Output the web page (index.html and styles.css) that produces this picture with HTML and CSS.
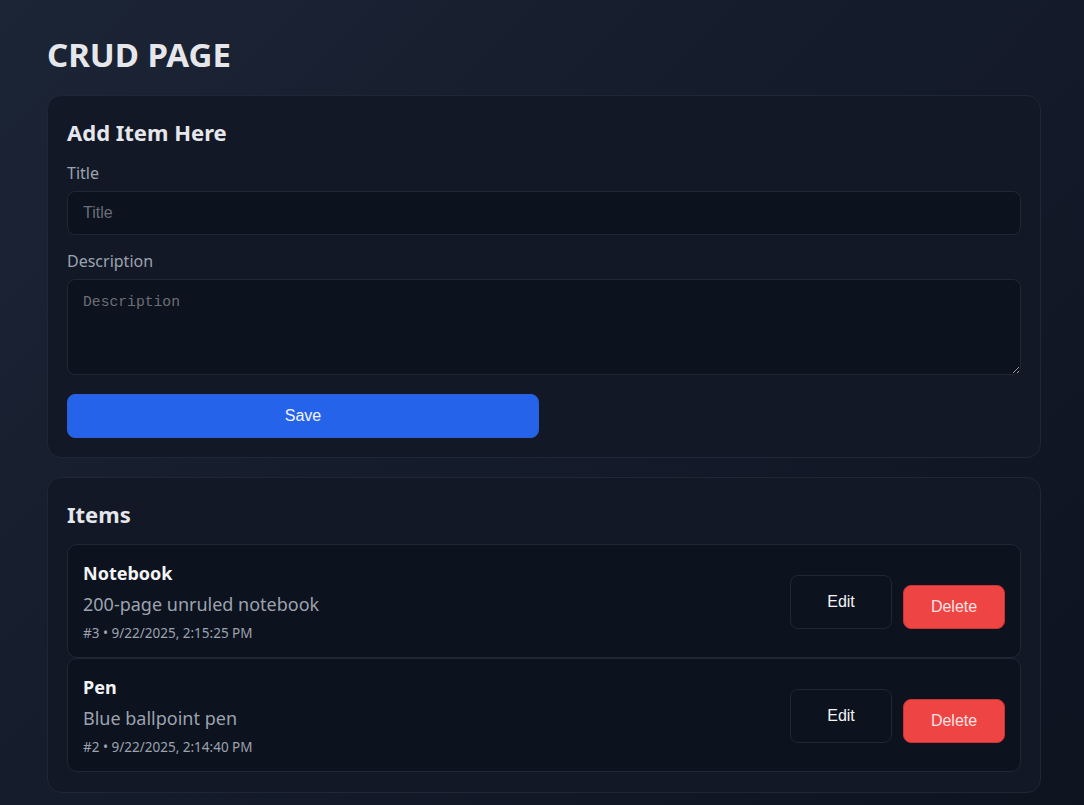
FILE: index.html
```html
<!DOCTYPE html>
<html>
<head>
<meta charset="utf-8">
<link rel="stylesheet" href="styles.css">
</head>
<body>
<div class="page">
  <h1 class="title">CRUD PAGE</h1>
  <section class="card form-card">
    <h2 class="card-title">Add Item Here</h2>
    <label class="label">Title</label>
    <input class="input" type="text" placeholder="Title">
    <label class="label">Description</label>
    <textarea class="textarea" placeholder="Description"></textarea>
    <button class="btn-save">Save</button>
  </section>
  <section class="card list-card">
    <h2 class="card-title">Items</h2>
    <div class="items">
      <div class="item">
        <div class="item-info">
          <div class="item-name">Notebook</div>
          <div class="item-desc">200-page unruled notebook</div>
          <div class="item-meta">#3 • 9/22/2025, 2:15:25 PM</div>
        </div>
        <div class="actions">
          <button class="btn-edit">Edit</button>
          <button class="btn-delete">Delete</button>
        </div>
      </div>
      <div class="item">
        <div class="item-info">
          <div class="item-name">Pen</div>
          <div class="item-desc">Blue ballpoint pen</div>
          <div class="item-meta">#2 • 9/22/2025, 2:14:40 PM</div>
        </div>
        <div class="actions">
          <button class="btn-edit">Edit</button>
          <button class="btn-delete">Delete</button>
        </div>
      </div>
    </div>
  </section>
</div>
</body>
</html>
```

FILE: styles.css
```css
html, body {
  margin: 0;
  padding: 0;
  height: 100%;
}
body {
  background: linear-gradient(135deg, #1c2536 0%, #141b2a 50%, #0e1320 100%);
  font-family: "Noto Sans", "Open Sans", sans-serif;
  color: #e5e7eb;
  overflow: hidden;
}
.page {
  margin: 0 43px 0 47px;
  padding-top: 33px;
}
.title {
  margin: 0 0 18px 0;
  font-size: 33px;
  font-weight: 700;
  line-height: 44px;
  color: #e5e7eb;
}
.card {
  background: #121826;
  border: 1px solid #1f2735;
  border-radius: 14px;
  padding: 20px 19px;
  margin-bottom: 19px;
}
.card-title {
  margin: 0;
  font-size: 22px;
  font-weight: 700;
  line-height: 32px;
  color: #e5e7eb;
}
.form-card {
  padding-bottom: 19px;
}
.form-card .card-title {
  margin-bottom: 14px;
}
.label {
  display: block;
  font-size: 16px;
  line-height: 22px;
  color: #9ca3af;
  margin-bottom: 7px;
}
.input, .textarea {
  display: block;
  box-sizing: border-box;
  width: 100%;
  background: #0c121e;
  border: 1px solid #1f2735;
  border-radius: 8px;
  color: #e5e7eb;
  padding: 0 15px;
  outline: none;
}
.input {
  height: 44px;
  font-family: "Liberation Sans", Arial, sans-serif;
  font-size: 16px;
  margin-bottom: 15px;
}
.input::placeholder {
  color: #6b6f76;
}
.textarea {
  height: 96px;
  padding: 14px 15px;
  font-family: "Liberation Mono", "DejaVu Sans Mono", monospace;
  font-size: 14.7px;
  resize: vertical;
  margin-bottom: 19px;
}
.textarea::placeholder {
  color: #6b6f76;
}
.btn-save {
  display: block;
  width: 472px;
  height: 44px;
  background: #2563eb;
  border: 1px solid #2d5fd6;
  border-radius: 8px;
  color: #f3f4f6;
  font-family: "Liberation Sans", Arial, sans-serif;
  font-size: 16px;
  cursor: pointer;
}
.list-card {
  padding-top: 20px;
}
.list-card .card-title {
  margin-bottom: 14px;
}
.items {
  display: flex;
  flex-direction: column;
  gap: 0;
}
.item {
  display: flex;
  align-items: center;
  justify-content: space-between;
  background: #0c121e;
  border: 1px solid #1f2735;
  border-radius: 10px;
  padding: 15px 15px 13px 15px;
}
.item-name {
  font-size: 18px;
  font-weight: 700;
  line-height: 26px;
  color: #f3f4f6;
}
.item-desc {
  font-size: 18px;
  line-height: 28px;
  color: #9ca3af;
  margin-top: 4px;
}
.item-meta {
  font-size: 13.5px;
  line-height: 22px;
  color: #9ca3af;
  margin-top: 4px;
}
.actions {
  display: flex;
  align-items: flex-end;
  gap: 11px;
}
.btn-edit, .btn-delete {
  width: 102px;
  font-family: "Liberation Sans", Arial, sans-serif;
  font-size: 16px;
  border-radius: 8px;
  cursor: pointer;
}
.btn-edit {
  height: 54px;
  background: #0c121e;
  border: 1px solid #1f2735;
  color: #f3f4f6;
}
.btn-delete {
  height: 44px;
  background: #ef4444;
  border: 1px solid #c93434;
  color: #fde2e2;
}
```
